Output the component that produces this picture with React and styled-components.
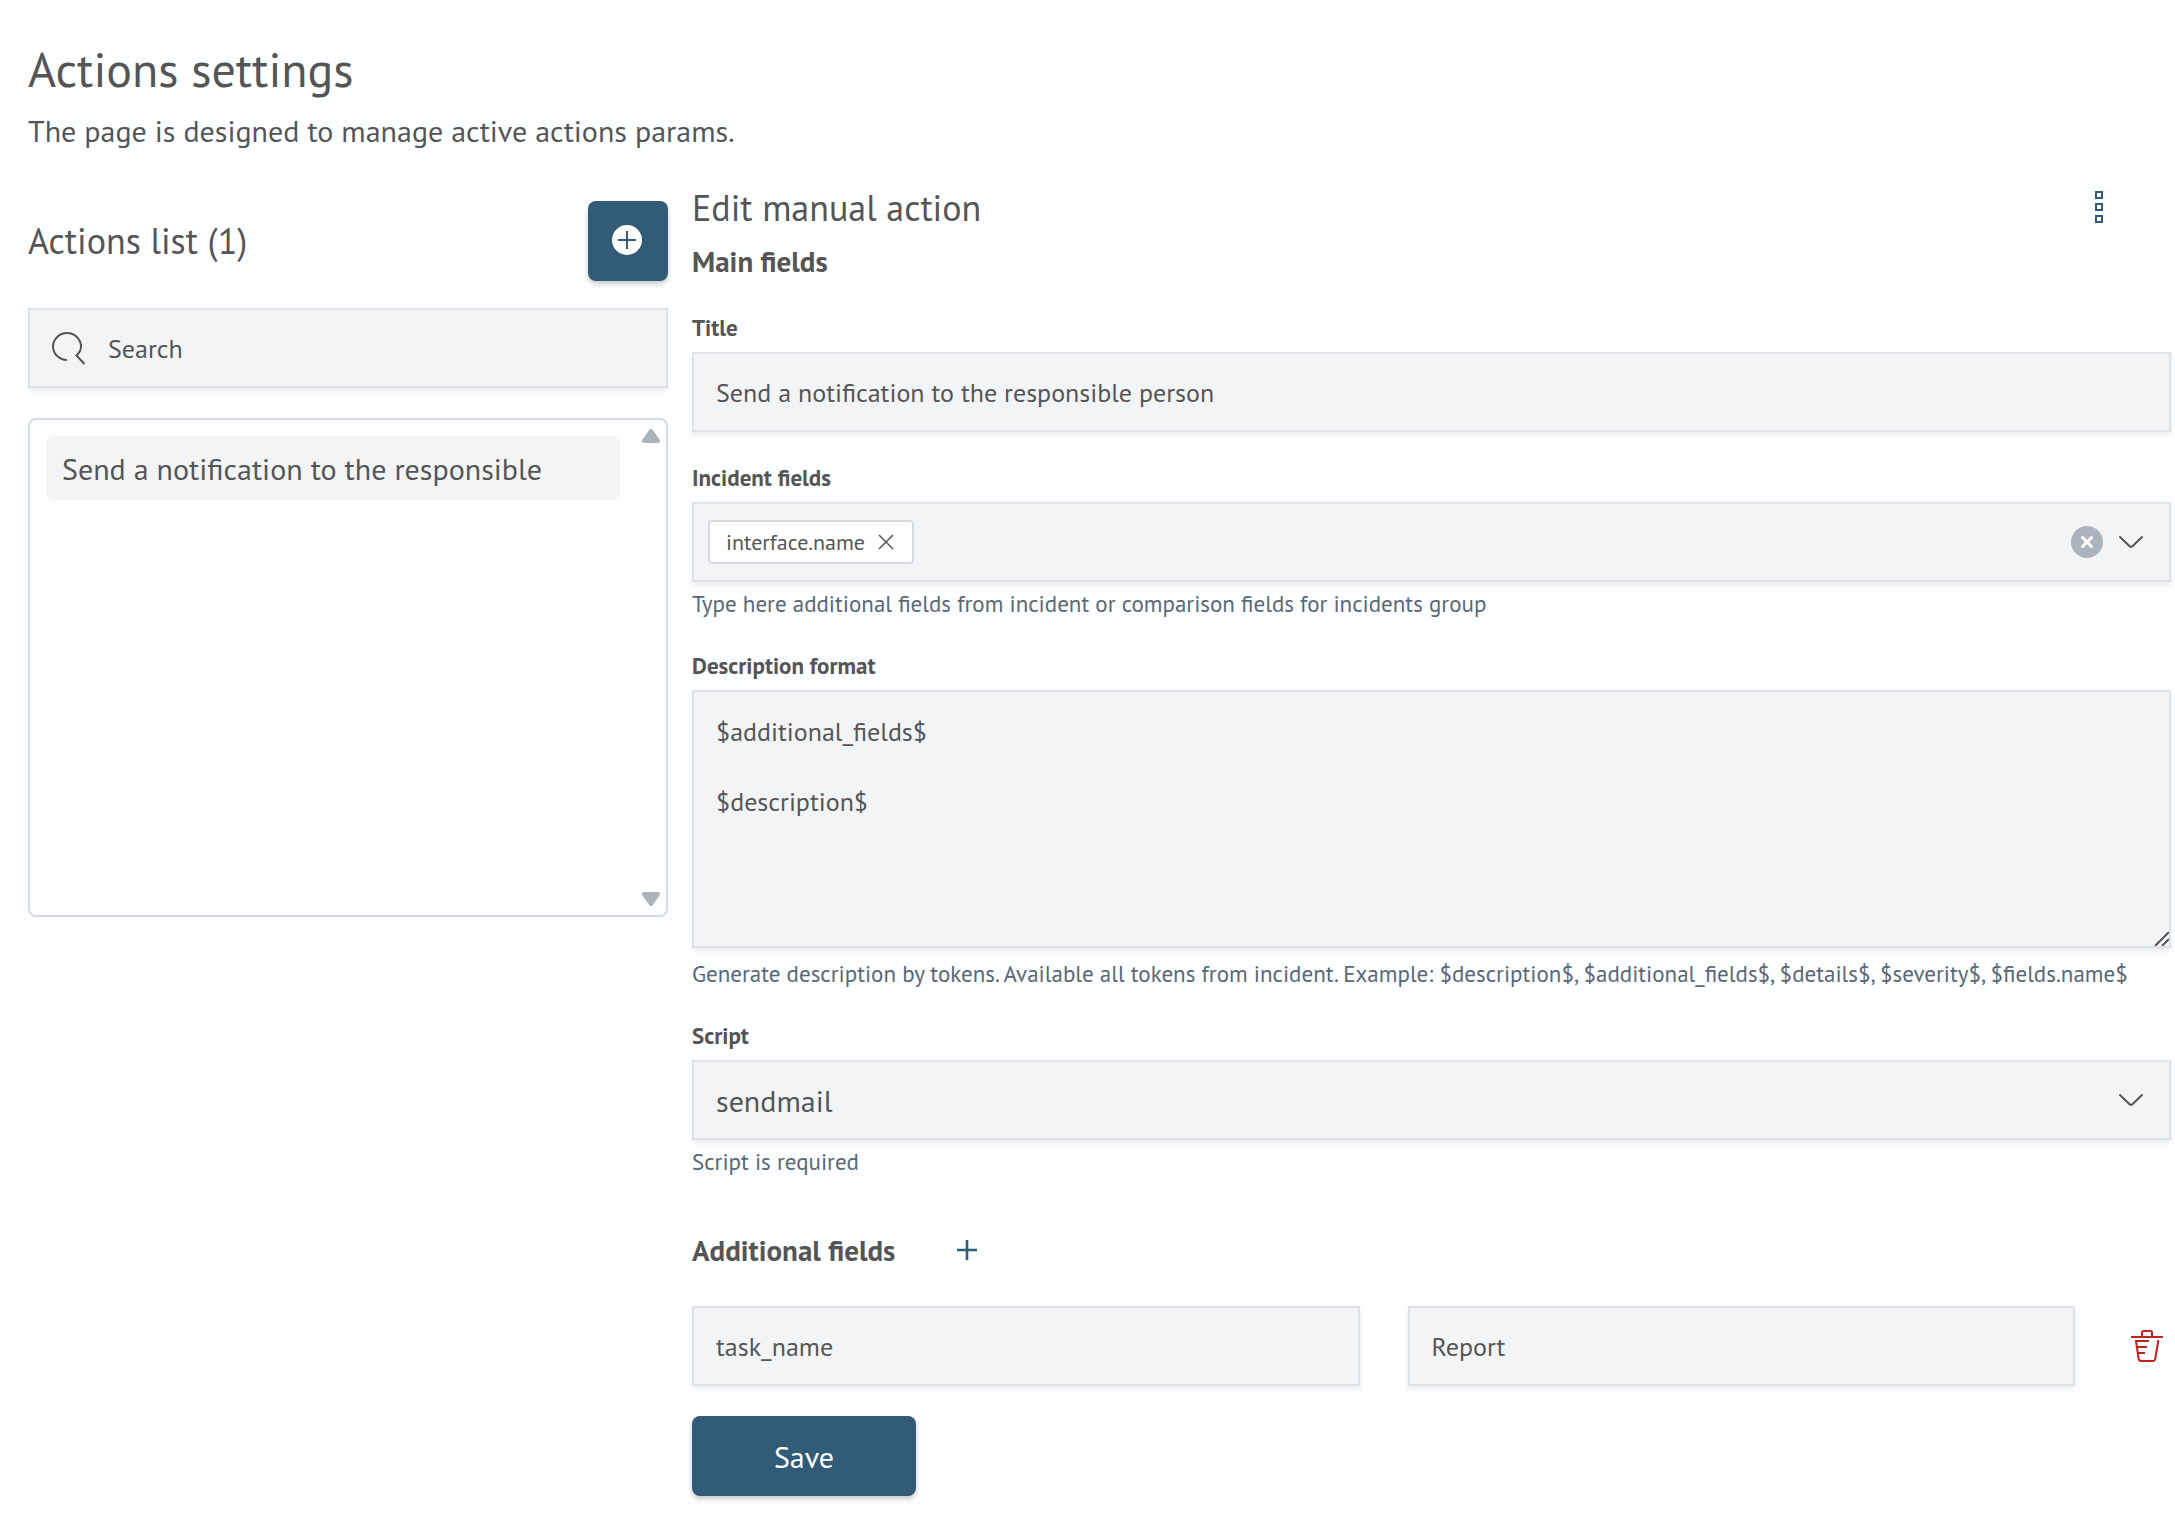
import React, { useState } from 'react';
import styled, { createGlobalStyle } from 'styled-components';

const colors = {
  page: '#fdfeff',
  text: '#555555',
  hint: '#5a6875',
  primary: '#315b76',
  fill: '#f3f4f6',
  border: '#dfe1e8',
  listBorder: '#d8dae1',
  muted: '#abb4bc',
  danger: '#c0231f',
};

const GlobalStyle = createGlobalStyle`
  *, *::before, *::after {
    box-sizing: border-box;
  }

  body {
    margin: 0;
    background: ${colors.page};
    color: ${colors.text};
    font-family: "PT Sans", Lato, "Open Sans", sans-serif;
    font-size: 30px;
  }

  button, input, textarea, select {
    font-family: inherit;
    color: inherit;
    margin: 0;
  }
`;

const Page = styled.main`
  padding: 39px 4px 32px 28px;
`;

const PageTitle = styled.h1`
  margin: 0;
  font-size: 48px;
  font-weight: 400;
  line-height: 60px;
`;

const PageText = styled.p`
  margin: 12px 0 0;
  font-size: 30px;
  line-height: 40px;
`;

const Columns = styled.div`
  display: grid;
  grid-template-columns: minmax(280px, 640px) minmax(0, 1fr);
  gap: 24px;
  align-items: start;
  margin-top: 33px;
`;

const Sidebar = styled.aside`
  display: flex;
  flex-direction: column;
  padding-top: 17px;
`;

const Row = styled.div`
  display: flex;
  align-items: center;
  justify-content: space-between;
`;

const EditorHeader = styled(Row)`
  margin-bottom: 8px;
  padding-right: 48px;
`;

const SectionTitle = styled.h2`
  margin: 0;
  font-size: 36px;
  font-weight: 400;
  line-height: 48px;
`;

const GroupTitle = styled.h3`
  margin: 0;
  font-size: 29px;
  font-weight: 700;
  line-height: 42px;
`;

const PrimaryButton = styled.button`
  display: flex;
  align-items: center;
  justify-content: center;
  align-self: flex-start;
  width: ${({ $square }) => ($square ? '80px' : '224px')};
  height: 80px;
  padding: 0;
  border: none;
  border-radius: 8px;
  background: ${colors.primary};
  color: #fff;
  font-size: 30px;
  box-shadow: 0 3px 5px rgba(0, 0, 0, 0.2);
  cursor: pointer;
`;

const IconButton = styled.button`
  display: flex;
  align-items: center;
  justify-content: center;
  width: ${({ $size = 48 }) => $size}px;
  height: ${({ $size = 48 }) => $size}px;
  flex-shrink: 0;
  padding: 0;
  border: none;
  background: none;
  color: ${({ $color }) => $color || colors.text};
  cursor: pointer;
`;

const Control = styled.div`
  display: flex;
  align-items: center;
  position: relative;
  min-height: 80px;
  border: 2px solid ${colors.border};
  background: ${colors.fill};
  box-shadow: 0 3px 5px rgba(60, 70, 90, 0.1);
`;

const Input = styled.input`
  flex: 1;
  min-width: 0;
  height: 76px;
  padding: 0 22px;
  border: none;
  outline: none;
  background: none;
  font-size: 26px;

  &::placeholder {
    color: ${colors.text};
    opacity: 1;
  }
`;

const SearchBox = styled(Control)`
  margin-top: 27px;
  padding-left: 22px;
`;

const TextAreaBox = styled(Control)`
  margin-bottom: 4px;
`;

const TextArea = styled.textarea`
  display: block;
  flex: 1;
  min-width: 0;
  height: 254px;
  padding: 22px;
  border: none;
  outline: none;
  background: none;
  font-size: 26px;
  line-height: 35px;
  resize: vertical;

  &::-webkit-resizer {
    display: none;
  }
`;

const ResizeGrip = styled.svg`
  position: absolute;
  right: 0;
  bottom: 0;
  pointer-events: none;
`;

const Select = styled.select`
  flex: 1;
  height: 76px;
  padding: 0 64px 0 22px;
  border: none;
  outline: none;
  background: none;
  font-size: 30px;
  appearance: none;
`;

const SelectArrow = styled.span`
  position: absolute;
  right: 26px;
  display: flex;
  pointer-events: none;
`;

const MultiSelect = styled(Control)`
  padding: 0 26px 0 14px;
`;

const Chip = styled.span`
  display: flex;
  align-items: center;
  gap: 11px;
  height: 44px;
  padding: 0 16px;
  border: 2px solid ${colors.listBorder};
  border-radius: 4px;
  background: #fff;
  font-size: 22px;
`;

const Actions = styled.div`
  display: flex;
  align-items: center;
  gap: 16px;
`;

const ListBox = styled.div`
  display: flex;
  justify-content: space-between;
  height: 499px;
  margin-top: 30px;
  padding: 16px 6px 16px 16px;
  border: 2px solid ${colors.listBorder};
  border-radius: 8px;
`;

const List = styled.ul`
  flex: 1;
  min-width: 0;
  margin: 0 22px 0 0;
  padding: 0;
  list-style: none;
`;

const ListItem = styled.button`
  display: block;
  width: 100%;
  height: 64px;
  padding: 0 16px;
  border: none;
  border-radius: 8px;
  background: ${colors.fill};
  font-size: 30px;
  text-align: left;
  white-space: nowrap;
  overflow: hidden;
  text-overflow: ellipsis;
`;

const ScrollTrack = styled.div`
  display: flex;
  flex-direction: column;
  justify-content: space-between;
  margin: -7px 0;
  color: ${colors.muted};
`;

const Form = styled.form`
  display: flex;
  flex-direction: column;
`;

const FieldBlock = styled.div`
  display: flex;
  flex-direction: column;
  margin-top: 32px;
`;

const Label = styled.label`
  margin-bottom: 10px;
  font-size: 23px;
  font-weight: 700;
  line-height: 28px;
`;

const Hint = styled.p`
  margin: 6px 0 0;
  color: ${colors.hint};
  font-size: 23px;
  line-height: 32px;
`;

const AdditionalHeader = styled.div`
  display: flex;
  align-items: center;
  gap: 48px;
  margin-top: 48px;
`;

const PairRow = styled.div`
  display: grid;
  grid-template-columns: minmax(0, 1fr) minmax(0, 1fr) 48px;
  gap: 48px;
  align-items: center;
  margin: 32px 0 30px;
`;

const PlusCircleIcon = () => (
  <svg width="32" height="32" viewBox="0 0 32 32" aria-hidden="true">
    <circle cx="15" cy="15" r="15" fill="#fff" />
    <path d="M6 15h18M15 6v18" stroke={colors.primary} strokeWidth="2" />
  </svg>
);

const SearchIcon = () => (
  <svg width="34" height="34" viewBox="1 0 34 34" fill="none" stroke="currentColor" strokeWidth="2" aria-hidden="true">
    <path d="M16 29C8.500 29 2 23 2 15.500S8.500 2 16 2s14 6 14 13.500c0 3.500-1.800 6.500-4.500 9l8 8.500" />
  </svg>
);

const ChevronIcon = () => (
  <svg width="24" height="14" viewBox="0 0 24 14" fill="none" stroke="currentColor" strokeWidth="2" strokeLinecap="round" aria-hidden="true">
    <path d="M1 2l9.600 9.200c.8.800 2 .8 2.800 0L23 2" />
  </svg>
);

const ClearIcon = () => (
  <svg width="32" height="32" viewBox="0 0 32 32" aria-hidden="true">
    <circle cx="16" cy="16" r="16" fill={colors.muted} />
    <path d="M11.500 11.500l9 9M20.500 11.500l-9 9" stroke="#fff" strokeWidth="3" strokeLinecap="round" />
  </svg>
);

const CrossIcon = () => (
  <svg width="16" height="16" viewBox="0 0 16 16" stroke="currentColor" strokeWidth="1.5" aria-hidden="true">
    <path d="M1 1l14 14M15 1L1 15" />
  </svg>
);

const MoreIcon = () => (
  <svg width="8" height="34" viewBox="0 0 8 34" fill="none" stroke="currentColor" strokeWidth="2" aria-hidden="true">
    <path d="M1 1h6v6H1zM1 13h6v6H1zM1 25h6v6H1z" />
  </svg>
);

const PlusIcon = () => (
  <svg width="20" height="20" viewBox="0 0 20 20" stroke="currentColor" strokeWidth="2.6" aria-hidden="true">
    <path d="M0 10h20M10 0v20" />
  </svg>
);

const TrashIcon = () => (
  <svg width="32" height="32" viewBox="0 0 32 32" fill="none" stroke="currentColor" strokeWidth="2" aria-hidden="true">
    <path d="M0 7h32M11 7V2.500c0-1 .5-1.500 1.500-1.500h7c1 0 1.500.5 1.500 1.500V7" />
    <path d="M4 11h14M6 17h10M7 23h7" />
    <path d="M5 11l2.600 17.500c.3 1.700 1 2.500 2.600 2.500h11.600c1.600 0 2.300-.8 2.500-2.500L27.400 10" />
  </svg>
);

const TriangleIcon = ({ down }) => (
  <svg width="18" height="14" viewBox="0 0 18 14" fill="currentColor" stroke="currentColor" strokeWidth="4" strokeLinejoin="round" aria-hidden="true">
    <path d={down ? 'M2 2h14L9 12z' : 'M2 12h14L9 2z'} />
  </svg>
);

const Field = ({ id, label, hint, children }) => (
  <FieldBlock>
    <Label htmlFor={id}>{label}</Label>
    {children}
    {hint && <Hint>{hint}</Hint>}
  </FieldBlock>
);

const App = () => {
  const [search, setSearch] = useState('');
  const [fields, setFields] = useState(['interface.name']);

  return (
    <>
      <GlobalStyle />
      <Page>
        <PageTitle>Actions settings</PageTitle>
        <PageText>The page is designed to manage active actions params.</PageText>

        <Columns>
          <Sidebar>
            <Row>
              <SectionTitle>Actions list (1)</SectionTitle>
              <PrimaryButton type="button" $square aria-label="Add action">
                <PlusCircleIcon />
              </PrimaryButton>
            </Row>
            <SearchBox>
              <SearchIcon />
              <Input
                type="text"
                aria-label="Search"
                placeholder="Search"
                value={search}
                onChange={(e) => setSearch(e.target.value)}
              />
            </SearchBox>
            <ListBox>
              <List>
                <li>
                  <ListItem type="button">Send a notification to the responsible</ListItem>
                </li>
              </List>
              <ScrollTrack>
                <TriangleIcon />
                <TriangleIcon down />
              </ScrollTrack>
            </ListBox>
          </Sidebar>

          <Form onSubmit={(e) => e.preventDefault()}>
            <EditorHeader>
              <SectionTitle>Edit manual action</SectionTitle>
              <IconButton type="button" aria-label="More" $color={colors.primary}>
                <MoreIcon />
              </IconButton>
            </EditorHeader>
            <GroupTitle>Main fields</GroupTitle>

            <Field id="title" label="Title">
              <Control>
                <Input id="title" type="text" defaultValue="Send a notification to the responsible person" />
              </Control>
            </Field>

            <Field
              id="incident-fields"
              label="Incident fields"
              hint="Type here additional fields from incident or comparison fields for incidents group"
            >
              <MultiSelect>
                {fields.map((name) => (
                  <Chip key={name}>
                    {name}
                    <IconButton
                      type="button"
                      $size={20}
                      aria-label={`Remove ${name}`}
                      onClick={() => setFields(fields.filter((f) => f !== name))}
                    >
                      <CrossIcon />
                    </IconButton>
                  </Chip>
                ))}
                <Input id="incident-fields" type="text" />
                <Actions>
                  <IconButton type="button" $size={32} aria-label="Clear all" onClick={() => setFields([])}>
                    <ClearIcon />
                  </IconButton>
                  <IconButton type="button" $size={24} aria-label="Open list">
                    <ChevronIcon />
                  </IconButton>
                </Actions>
              </MultiSelect>
            </Field>

            <Field
              id="description"
              label="Description format"
              hint="Generate description by tokens. Available all tokens from incident. Example: $description$, $additional_fields$, $details$, $severity$, $fields.name$"
            >
              <TextAreaBox>
                <TextArea id="description" defaultValue={'$additional_fields$\n\n$description$'} />
                <ResizeGrip width="16" height="16" viewBox="0 0 16 16" stroke={colors.text} strokeWidth="2">
                  <path d="M2 16L16 2M9 16l7-7" />
                </ResizeGrip>
              </TextAreaBox>
            </Field>

            <Field id="script" label="Script" hint="Script is required">
              <Control>
                <Select id="script" defaultValue="sendmail">
                  <option value="sendmail">sendmail</option>
                </Select>
                <SelectArrow>
                  <ChevronIcon />
                </SelectArrow>
              </Control>
            </Field>

            <AdditionalHeader>
              <GroupTitle>Additional fields</GroupTitle>
              <IconButton type="button" aria-label="Add field" $color={colors.primary}>
                <PlusIcon />
              </IconButton>
            </AdditionalHeader>

            <PairRow>
              <Control>
                <Input type="text" aria-label="Field name" defaultValue="task_name" />
              </Control>
              <Control>
                <Input type="text" aria-label="Field value" defaultValue="Report" />
              </Control>
              <IconButton type="button" aria-label="Delete field" $color={colors.danger}>
                <TrashIcon />
              </IconButton>
            </PairRow>

            <PrimaryButton type="submit">Save</PrimaryButton>
          </Form>
        </Columns>
      </Page>
    </>
  );
};

export default App;
